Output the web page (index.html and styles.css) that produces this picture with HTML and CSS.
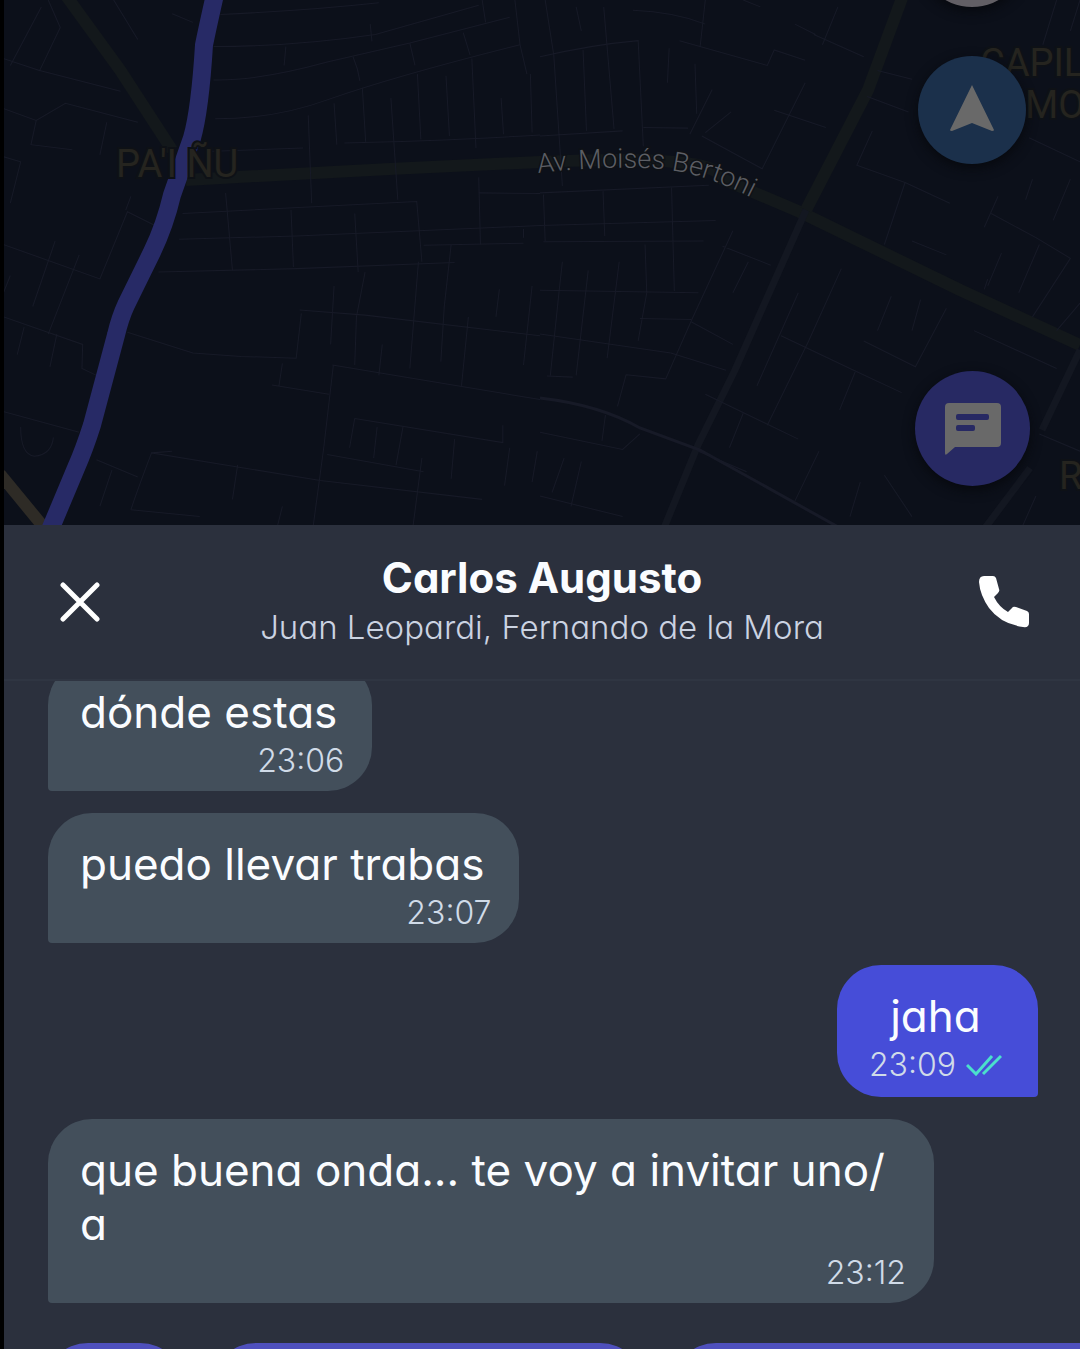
FILE: index.html
```html
<!DOCTYPE html>
<html lang="es">
<head>
<meta charset="utf-8">
<meta name="viewport" content="width=device-width, initial-scale=1">
<title>Chat con Carlos Augusto</title>
<link rel="stylesheet" href="styles.css">
</head>
<body>
<main class="app">
  <section class="map" aria-label="Mapa">
    <svg class="map-canvas" viewBox="4 0 1076 525" preserveAspectRatio="xMidYMid slice">
      <defs>
        <path id="bertoni" d="M538 173 L568 170 Q620 166 660 169 C700 173 728 184 780 213"/>
      </defs>
      <rect class="ground" x="0" y="0" width="1080" height="525"/>
      <!-- main avenues -->
      <path class="avenue" d="M62 -10 L120 70 L172 150"/>
      <path class="avenue" d="M186 180 Q360 170 540 162 T720 178 L800 212 L960 290 L1080 345"/>
      <path class="avenue" d="M905 -10 L868 90 L806 210"/>
      <path class="road" d="M806 210 L735 370 L698 445 L664 528"/>
      <path class="road" d="M1080 350 L1042 430 M1030 468 L985 528"/>
      <path class="street" d="M540 398 Q600 405 640 428 L700 450 L840 528"/>
      <!-- side streets, left half -->
      <g class="street" transform="scale(.3444)">
        <path d="M640 42 Q900 30 1100 8 M620 135 Q850 135 1090 100 L1390 15 M620 232 Q750 235 950 180 L1190 125 L1480 50 M625 345 Q800 345 950 290 Q1150 220 1510 130"/>
        <path d="M1075 70 L1080 120 M1190 125 L1205 190 M1345 95 L1365 160 M1495 0 L1510 130 L1530 215 M1025 165 Q1040 200 1045 235 M830 135 L825 190 M1400 0 L1410 65"/>
        <path d="M895 335 L905 590 M970 300 L978 420 M1052 255 L1062 415 M1135 285 L1155 580 M1212 215 L1222 405 M1295 220 L1305 395 M1370 170 L1382 430 M1455 285 L1462 390 M1540 215 L1545 385"/>
        <path d="M600 440 L880 430 M1000 415 Q1250 410 1568 392 M530 620 L1210 585 L1225 760 M520 695 L860 685 L1400 662 L1568 655 M460 790 L860 780 L1320 762 M1230 712 L1520 706 M1390 560 L1568 562"/>
        <path d="M655 560 L675 785 M845 610 L852 775 M1030 620 L1040 790 M1390 515 L1395 710 M1520 665 V690 M1215 760 L1190 1070 M1310 710 L1290 890 L1280 1050 M1060 790 L1035 920 L1030 1060 M970 830 L960 1000 M1450 840 L1440 920 M1545 830 L1520 1060"/>
        <path d="M870 900 L1060 915 L1568 975 M875 910 L860 1040 L700 1035 L560 1025 L370 965 M820 1055 L810 1120 M790 1118 L955 1145 M965 1060 L1568 1160 M1110 1000 L1100 1090 M1360 920 L1340 1120"/>
        <path d="M968 1060 L940 1300 L905 1560 M380 1480 Q400 1420 440 1315 L930 1395 L1400 1450 M440 1315 L500 1310 M380 1480 L580 1500 M690 1350 L675 1450 M950 1320 L1230 1370 M1030 1215 L1460 1285 V1235 M1030 1215 L1015 1300 M1095 1240 L1085 1330 M1170 1240 L1150 1350 M1320 1275 L1310 1390 M1225 1330 L1195 1560 M1480 1300 L1465 1410 M1560 1310 L1545 1400 M820 1470 L800 1550"/>
        <path d="M10 710 L290 810 L370 615 L450 655 M10 920 L240 1000 L238 1070 L280 1090 M10 1195 L230 1255 M160 700 L95 890 M230 740 L140 970 M30 800 L10 850 M70 950 L50 1030 M165 970 L145 1065 M60 1240 Q60 1320 100 1325 Q150 1320 155 1270 M280 1335 L400 1385 M325 1365 L290 1470"/>
        <path d="M10 170 L115 205 L175 80 L140 0 M115 205 L350 265 M30 190 L120 20 M10 315 L105 350 L190 300 L400 355 M105 350 L90 420 L210 435 M10 455 L60 470 L30 590 M310 355 L290 450 M330 0 L400 115 M500 40 L560 65 M380 570 L365 610"/>
      </g>
      <!-- side streets, right half -->
      <g class="street" transform="translate(540) scale(.3444)">
        <path d="M15 0 L40 160 L65 540 M105 20 L120 90 M125 145 L135 380 M185 20 L215 375 M0 165 Q150 130 285 118 L300 425 M270 30 Q390 35 480 70 M375 140 L370 240 M450 185 L455 330 M0 395 L240 380 M300 370 L430 372 M405 118 L660 190 L680 145 L770 175 M480 0 L465 135"/>
        <path d="M500 260 L435 390 M555 325 L480 385 M470 395 L645 490 L770 240 M680 320 L830 370 M795 100 L940 165 M865 20 L820 130 M740 70 L800 100 M590 0 L640 20"/>
        <path d="M0 560 L490 538 M0 655 L510 640 M10 702 L475 700 M0 843 L460 850 M290 925 L440 928 M0 970 L210 1000 L380 1025 M10 565 L15 700 M183 555 L188 685 M382 545 L390 845 M305 710 L310 850 L285 990 M65 760 L55 850 L30 1090 M140 785 L105 1090 M230 760 L195 1040 M20 1092 L95 1095"/>
        <path d="M560 670 L440 930 L365 1100 L250 1088 M530 715 L670 770 M440 935 L560 1000 M380 1025 L540 1075 M605 760 L560 850 M750 850 L630 1120 M875 780 L780 990 L660 1235 M700 975 L900 1070 L1050 1140 M940 990 L1090 1065 L1180 895 M1020 860 L980 960 M1105 870 L1080 960 M250 1088 L225 1180 M480 1145 L750 1275"/>
        <path d="M0 1255 L240 1305 L290 1260 M190 1205 L180 1280 M70 1330 L35 1430 M0 1440 L240 1500 M120 1340 L90 1470 M590 1200 L550 1300 M460 1310 L600 1370 M810 1310 L740 1455 M930 1400 L900 1500 M915 1080 L870 1190 M1000 1380 L1080 1500"/>
        <path d="M980 205 L1080 230 M950 280 L1070 325 M965 380 L920 480 L1060 530 L1000 710 M1060 530 L1190 590 M1080 700 L1180 740 M1330 570 L1290 660 M1310 620 L1440 690 L1540 750 L1430 920 M1450 710 L1390 850 M1430 520 L1410 580 M1540 520 L1490 640 M1568 880 L1500 960 M1300 810 L1290 840 M1340 735 L1300 830 M1420 400 L1568 470 M1500 0 L1460 130 M1568 0 L1540 90 M1260 960 L1500 1070 M1450 1260 L1568 1310 M1440 1440 L1400 1530"/>
      </g>
      <path class="highway" d="M0 474 L46 530"/>
      <path class="route" d="M216 -10 Q207 30 204 45 Q200 110 192 138 L172 195 Q165 225 152 252 L126 305 Q120 318 116 335 L92 425 Q84 450 76 468 L50 530"/>
      <text class="place" x="116" y="177">PA'I ÑU</text>
      <text class="place" x="980" y="76">CAPIL</text>
      <text class="place" x="1025" y="118">MO</text>
      <text class="place" x="1059" y="489">R</text>
      <text class="street-name"><textPath href="#bertoni">Av. Moisés Bertoni</textPath></text>
    </svg>
    <button class="map-button map-button-layers" type="button" aria-label="Capas"></button>
    <button class="map-button map-button-locate" type="button" aria-label="Mi ubicación">
      <svg viewBox="0 0 44 46" width="44" height="46"><path d="M22 0 L44 45 Q44 46 42 46 L22 38 L2 46 Q0 46 0 45Z"/></svg>
    </button>
    <button class="map-button map-button-chat" type="button" aria-label="Mensajes">
      <svg viewBox="0 0 56 52" width="56" height="52"><path fill-rule="evenodd" d="M4 0 H52 Q56 0 56 4 V40 Q56 44 52 44 H10 L2 51 Q0 53 0 50 V4 Q0 0 4 0Z M13 11 Q11 11 11 13 V15 Q11 17 13 17 H42 Q44 17 44 15 V13 Q44 11 42 11Z M13 22 Q11 22 11 24 V26 Q11 28 13 28 H28 Q30 28 30 26 V24 Q30 22 28 22Z"/></svg>
    </button>
  </section>

  <section class="chat">
    <header class="chat-header">
      <button class="icon-button" type="button" aria-label="Cerrar">
        <svg viewBox="0 0 40 40" width="40" height="40"><path class="cross" d="M3 3 L37 37 M37 3 L3 37"/></svg>
      </button>
      <div class="contact">
        <h1 class="contact-name">Carlos Augusto</h1>
        <p class="contact-place">Juan Leopardi, Fernando de la Mora</p>
      </div>
      <button class="icon-button" type="button" aria-label="Llamar">
        <svg viewBox="0 0 50 52" width="50" height="52"><path class="phone" d="M5 0 H14 Q16 0 17 2 L20 13 Q21 15 19 17 L15 21 Q20 31 29 36 L33 32 Q34 30 37 31 L48 35 Q50 36 50 38 V47 Q50 52 44 51 Q22 48 10 32 Q1 19 0 6 Q0 0 5 0Z"/></svg>
      </button>
    </header>

    <div class="messages">
      <ol class="message-list">
        <li class="bubble received">
          <p class="text">dónde estas</p>
          <div class="meta"><time>23:06</time></div>
        </li>
        <li class="bubble received">
          <p class="text">puedo llevar trabas</p>
          <div class="meta"><time>23:07</time></div>
        </li>
        <li class="bubble sent">
          <p class="text">jaha</p>
          <div class="meta"><time>23:09</time>
            <svg class="ticks" viewBox="0 0 36 22" width="36" height="22" role="img" aria-label="Leído"><path d="M1 11 L10 20 L26 2 M17 20 L35 2"/></svg>
          </div>
        </li>
        <li class="bubble received">
          <p class="text">que buena onda... te voy a invitar uno/<wbr>a</p>
          <div class="meta"><time>23:12</time></div>
        </li>
      </ol>
      <div class="replies">
        <button class="reply reply-short" type="button" aria-label="Respuesta corta"></button>
        <button class="reply reply-medium" type="button" aria-label="Respuesta media"></button>
        <button class="reply reply-long" type="button" aria-label="Respuesta larga"></button>
      </div>
    </div>
  </section>
</main>
</body>
</html>
```
FILE: styles.css
```css
* {
  box-sizing: border-box;
}

body {
  margin: 0;
  background: #000;
  color: #fafcff;
  font-family: Inter, "Liberation Sans", sans-serif;
  font-feature-settings: "cv11";
}

h1,
p,
ol {
  margin: 0;
  padding: 0;
}

button {
  border: 0;
  padding: 0;
  cursor: pointer;
}

.app {
  display: flex;
  flex-direction: column;
  height: 100vh;
  padding-left: 4px;
  overflow: hidden;
}

/* Map */

.map {
  position: relative;
  flex: none;
  height: 525px;
  overflow: hidden;
  background: #0c101a;
}

.map-canvas {
  display: block;
  width: 100%;
  height: 100%;
  fill: none;
}

.ground {
  fill: #0c101a;
}

.avenue {
  stroke: #13181b;
  stroke-width: 12;
}

.road {
  stroke: #131721;
  stroke-width: 7;
}

.street {
  stroke: #171a27;
  stroke-width: 3;
}

.highway {
  stroke: #2e2b26;
  stroke-width: 12;
}

.route {
  stroke: #272a66;
  stroke-width: 18;
  stroke-linejoin: round;
}

.place {
  fill: #25241f;
  stroke: #0e1116;
  stroke-width: 4;
  paint-order: stroke;
  font: 400 38px Roboto, sans-serif;
}

.street-name {
  fill: #5c5e64;
  stroke: #0e1116;
  stroke-width: 3;
  paint-order: stroke;
  font: 300 27px Roboto, sans-serif;
}

.map-button {
  position: absolute;
  right: 54px;
  display: grid;
  place-items: center;
  width: 108px;
  height: 108px;
  border-radius: 50%;
  box-shadow: 0 4px 12px #07090e;
  fill: #696969;
}

.map-button-layers {
  top: -101px;
  background: #625f65;
}

.map-button-locate {
  top: 56px;
  background: #1b304b;
}

.map-button-locate svg {
  margin-bottom: 4px;
}

.map-button-chat {
  top: 371px;
  right: 50px;
  width: 115px;
  height: 115px;
  background: #272963;
}

/* Chat sheet */

.chat {
  display: flex;
  flex: 1;
  flex-direction: column;
  min-height: 0;
  background: #2b303d;
}

.chat-header {
  display: grid;
  grid-template-columns: 56px 1fr 56px;
  align-items: center;
  height: 156px;
  padding: 0 48px;
  border-bottom: 2px solid #2f3542;
}

.icon-button {
  display: grid;
  place-items: center;
  height: 56px;
  background: none;
}

.cross {
  fill: none;
  stroke: #fff;
  stroke-width: 5;
  stroke-linecap: round;
}

.phone {
  fill: #fff;
}

.contact {
  text-align: center;
}

.contact-name {
  font-size: 42px;
  font-weight: 700;
  line-height: 50px;
}

.contact-place {
  color: #cbd3e2;
  font-size: 33px;
  font-weight: 300;
  line-height: 48px;
}

.messages {
  flex: 1;
  min-height: 0;
  overflow: hidden;
}

.message-list {
  display: flex;
  flex-direction: column;
  gap: 22px;
  margin-top: -20px;
  padding: 0 42px 0 44px;
  list-style: none;
}

.bubble {
  max-width: 886px;
  padding: 24px 28px 8px 32px;
  border-radius: 44px;
}

.received {
  align-self: flex-start;
  background: #434f5b;
  border-bottom-left-radius: 4px;
}

.sent {
  align-self: flex-end;
  padding: 24px 36px 10px 32px;
  background: #464dd8;
  border-bottom-right-radius: 4px;
}

.text {
  padding-right: 7px;
  font-size: 44px;
  font-weight: 400;
  line-height: 54px;
}

.sent .text {
  padding-right: 0;
  text-align: center;
}

.meta {
  display: flex;
  align-items: center;
  justify-content: flex-end;
  gap: 10px;
  color: #d0dbe8;
  font-size: 32px;
  font-weight: 300;
  line-height: 44px;
}

.ticks {
  fill: none;
  stroke: #4be0cc;
  stroke-width: 3;
}

.replies {
  display: flex;
  gap: 28px;
  margin-top: 40px;
  padding-left: 40px;
}

.reply {
  flex: none;
  height: 88px;
  border-radius: 44px;
  background: #4f50bd;
}

.reply-short { width: 140px; }
.reply-medium { width: 432px; }
.reply-long { width: 480px; }
```
